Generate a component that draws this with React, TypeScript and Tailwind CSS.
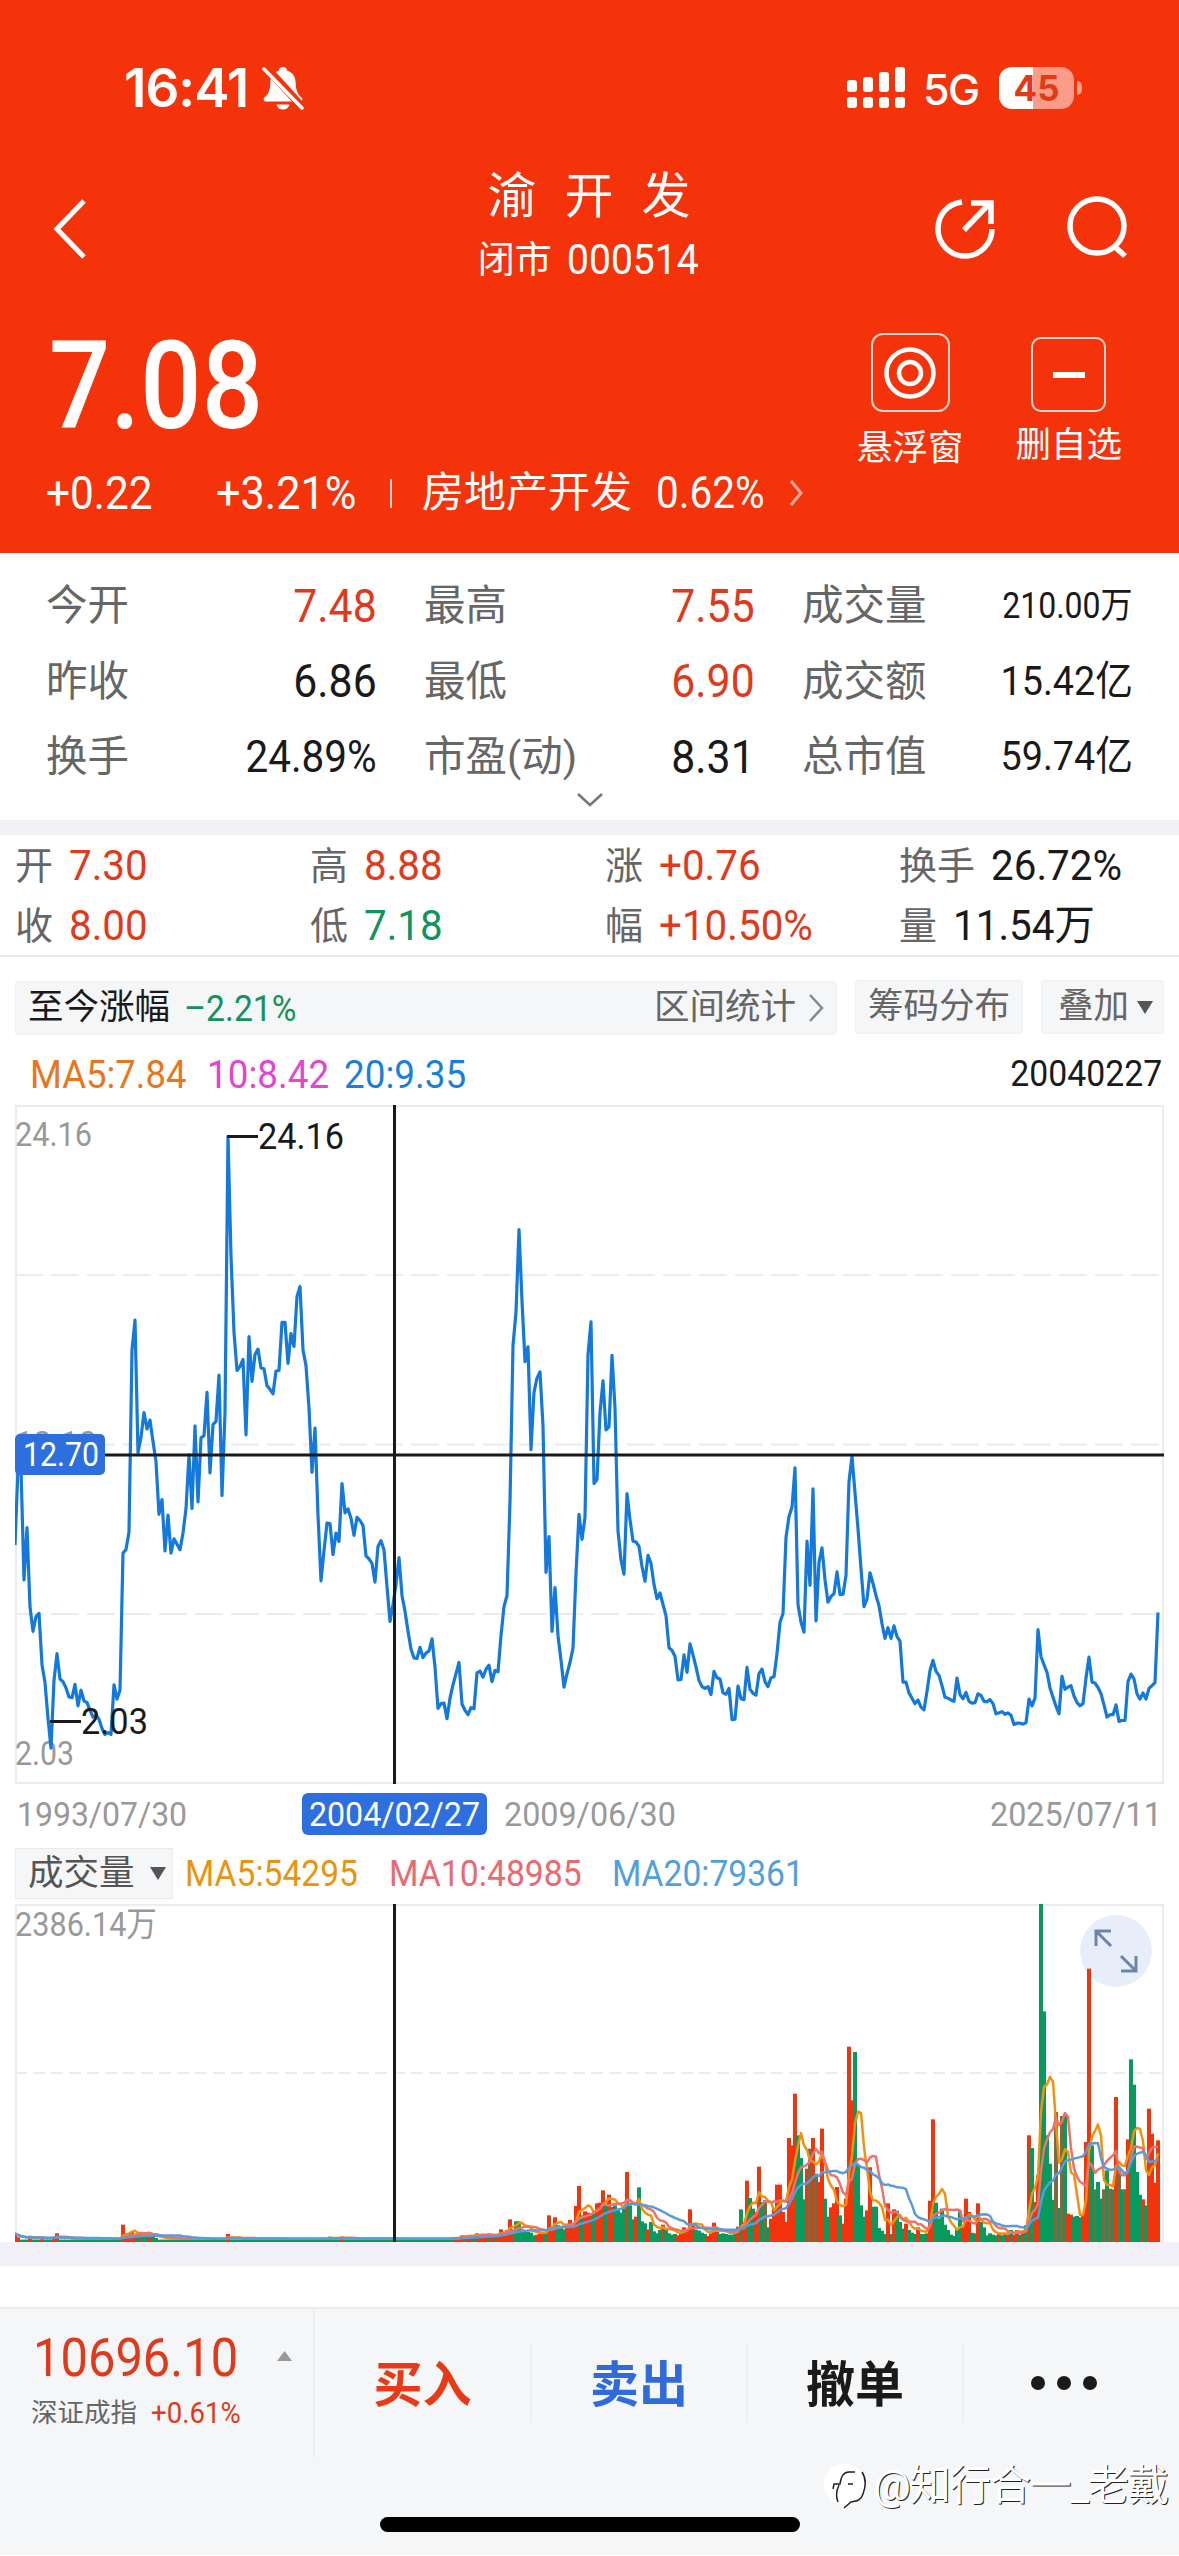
import type { ReactNode } from 'react';

// one value per month, measured down from the top of the price canvas
const PRICE = [
  997, 825, 825, 1075, 958, 1135, 1190, 1157, 1150, 1265, 1305, 1385, 1452, 1300, 1240, 1297, 1303, 1317, 1337, 1339,
  1309, 1357, 1322, 1346, 1350, 1367, 1382, 1378, 1387, 1408, 1421, 1417, 1421, 1310, 1342, 1322, 1015, 1007, 968, 560,
  493, 790, 755, 700, 737, 717, 765, 810, 928, 895, 1010, 930, 1015, 983, 995, 1007, 970, 915, 795, 915,
  730, 900, 757, 752, 655, 835, 727, 720, 616, 886, 700, 82, 350, 520, 606, 597, 581, 750, 530, 630,
  570, 558, 600, 602, 640, 648, 658, 607, 606, 498, 498, 590, 523, 552, 440, 418, 560, 595, 690, 834,
  735, 930, 1077, 1010, 948, 949, 1018, 970, 989, 859, 925, 916, 937, 975, 935, 942, 953, 1021, 1028, 1038,
  1080, 1000, 987, 1008, 1090, 1168, 1130, 1085, 1025, 1110, 1145, 1190, 1230, 1250, 1251, 1226, 1249, 1239, 1234, 1207,
  1270, 1363, 1352, 1351, 1386, 1340, 1310, 1285, 1260, 1353, 1367, 1377, 1361, 1364, 1283, 1279, 1293, 1275, 1266, 1303,
  1278, 1281, 1200, 1135, 1110, 900, 550, 475, 290, 450, 586, 553, 783, 655, 623, 609, 730, 1058, 978, 1190,
  1092, 1200, 1255, 1315, 1285, 1260, 1228, 1060, 928, 984, 935, 570, 497, 859, 850, 700, 629, 739, 732, 572,
  690, 965, 1030, 1062, 882, 940, 988, 990, 1000, 1045, 1078, 1020, 1038, 1085, 1117, 1104, 1130, 1155, 1227, 1233,
  1246, 1299, 1298, 1243, 1282, 1218, 1243, 1270, 1300, 1314, 1318, 1314, 1332, 1280, 1294, 1297, 1328, 1331, 1318, 1388,
  1387, 1313, 1341, 1343, 1271, 1320, 1329, 1333, 1285, 1275, 1303, 1314, 1294, 1292, 1240, 1170, 1150, 980, 933, 912,
  824, 1130, 1170, 1192, 988, 1087, 871, 1167, 1035, 1003, 1075, 1125, 1112, 1106, 1057, 1108, 1107, 1065, 855, 798,
  880, 960, 1050, 1135, 1118, 1059, 1083, 1110, 1133, 1173, 1206, 1182, 1206, 1178, 1202, 1212, 1304, 1304, 1328, 1340,
  1352, 1344, 1360, 1366, 1325, 1278, 1255, 1280, 1289, 1312, 1338, 1340, 1344, 1347, 1295, 1332, 1341, 1327, 1347, 1351,
  1350, 1330, 1334, 1347, 1348, 1343, 1352, 1375, 1373, 1370, 1376, 1373, 1378, 1399, 1396, 1396, 1398, 1395, 1342, 1357,
  1340, 1186, 1247, 1265, 1282, 1317, 1338, 1358, 1375, 1291, 1320, 1315, 1312, 1335, 1350, 1357, 1352, 1295, 1248, 1304,
  1306, 1316, 1330, 1355, 1382, 1377, 1377, 1355, 1392, 1390, 1390, 1303, 1286, 1297, 1330, 1342, 1328, 1342, 1318, 1312,
  1305, 1148,
];

// r = up month, g = down month, o = overlapped months; number is the bar height
const EARLY_PEAKS: Record<number, string> = {
  0: 'r22', 1: 'r14', 5: 'r14', 9: 'r12', 13: 'r16', 14: 'r26', 36: 'r52', 37: 'r26', 38: 'r24', 39: 'r30',
  40: 'r22', 41: 'g22', 42: 'r20', 43: 'g18', 44: 'g16', 45: 'r16', 46: 'g20', 47: 'g12', 71: 'r24', 105: 'g16', 109: 'r16',
};
const RECENT =
  'g10 r12 r14 r20 g14 r15 r17 g15 r26 r16 r22 r15 g22 r18 g15 r22 r38 r30 r36 r68 r38 g62 g62 g38 g34 g30 g28 g20 r22 r24 r28 g30 r80 r40 r74 g50 g42 g38 r42 r66 r46 r108 r168 g80 r92 r88 r80 g84 r116 r118 r155 g110 r142 r105 g110 g98 g88 g100 r210 g110 g68 r76 g164 g62 g56 r38 g60 g32 g26 g36 r52 g36 g26 g22 g24 r20 r30 r44 r34 r98 r50 g36 g34 g28 g24 r18 r26 r58 r32 g24 g26 g24 g22 g22 g28 r46 g98 r60 r184 g132 g100 r90 r226 g120 o125 g44 r70 r100 r172 r172 r90 r60 r312 r290 r445 g320 ' +
  'g252 g128 r220 o280 r312 o205 r180 r340 g130 g76 r104 r116 r165 g80 r55 r130 r586 r425 g570 g230 g110 g76 r95 r224 g106 g106 g42 g34 g24 r116 g24 r98 g94 g60 g40 r55 g36 g28 g24 r44 g24 g24 g26 r124 r368 g118 g70 g100 g52 g36 g22 g18 g40 g92 r44 r130 r90 g28 g26 r116 g60 g44 g20 g26 g22 g20 r24 g20 g26 r22 g36 r22 r36 g22 r30 g50 r320 g282 r120 r200 g1016 g692 g320 g235 g126 o390 g102 o378 g380 r85 r82 g76 g78 g74 r80 r300 r820 g290 o158 g180 g130 o158 g215 o160 g158 r435 o220 g158 o158 r308 g548 g472 g210 g142 r128 g110 r400 r325 r178 r305';

const VOLUME = [
  ...Array.from({ length: 146 }, (_, i) => EARLY_PEAKS[i] ?? 'g7'),
  ...RECENT.split(' '),
].map((token) => ({ kind: token[0], height: Number(token.slice(1)) / 3 }));

const BAR_COLOR: Record<string, string> = { r: '#f2330b', g: '#069a5c', o: '#7b6a3d' };

const RED = 'text-[#e0391b]';
const GREEN = 'text-[#14925c]';

const quotes: { label: string; value: string; className: string }[][] = [
  [
    { label: '今开', value: '7.48', className: `${RED} text-[46px] scale-x-[.93]` },
    { label: '最高', value: '7.55', className: `${RED} text-[46px] scale-x-[.93]` },
    { label: '成交量', value: '210.00万', className: 'text-[36px] scale-x-[.89]' },
  ],
  [
    { label: '昨收', value: '6.86', className: 'text-[46px] scale-x-[.93]' },
    { label: '最低', value: '6.90', className: `${RED} text-[46px] scale-x-[.93]` },
    { label: '成交额', value: '15.42亿', className: 'text-[41px] scale-x-[.92]' },
  ],
  [
    { label: '换手', value: '24.89%', className: 'text-[44px] scale-x-[.92]' },
    { label: '市盈(动)', value: '8.31', className: 'text-[46px] scale-x-[.93]' },
    { label: '总市值', value: '59.74亿', className: 'text-[41px] scale-x-[.92]' },
  ],
];

const monthStats = [
  { label: '开', value: '7.30', color: RED },
  { label: '高', value: '8.88', color: RED },
  { label: '涨', value: '+0.76', color: RED },
  { label: '换手', value: '26.72%', color: '' },
  { label: '收', value: '8.00', color: RED },
  { label: '低', value: '7.18', color: GREEN },
  { label: '幅', value: '+10.50%', color: RED },
  { label: '量', value: '11.54万', color: '' },
];

function movingAverage(size: number) {
  return VOLUME.map((_, i) => {
    const part = VOLUME.slice(Math.max(0, i - size + 1), i + 1);
    const avg = part.reduce((sum, bar) => sum + bar.height, 0) / part.length;
    return `${i * 3},${(337 - avg).toFixed(1)}`;
  }).join(' ');
}

// figures are set slightly narrower than the labels
function Num({ className = 'scale-x-[.93]', right, children }: { className?: string; right?: boolean; children: ReactNode }) {
  return (
    <span className={`inline-block whitespace-nowrap ${right ? 'origin-right' : 'origin-left'} ${className}`}>
      {children}
    </span>
  );
}

function StatusBar() {
  return (
    <div className="h-[176px] pt-[60px] pl-[124px] pr-[97px] flex items-start justify-between">
      <div className="flex items-center h-[56px]">
        <span className="font-['Inter'] font-semibold text-[53px] leading-none tracking-[-1px] w-[138px]">16:41</span>
        <svg width="42" height="44" viewBox="0 0 42 44">
          <path d="M21 1c-2.600 0-4 1.600-4.300 3.700C11 6.500 8.500 11 8.300 17c-.2 8-2 11-5.800 14.500C1 33 1.500 35.500 4 35.500h34c2.500 0 3-2.500 1.500-4C35.700 28 34 25 33.700 17c-.2-6-2.700-10.500-8.400-12.300C25 2.600 23.600 1 21 1zM14.500 38.500h13c-.7 3-3 5-6.500 5s-5.800-2-6.500-5z" fill="#fff" />
          <path d="M3 0l39 43" stroke="#f4330a" strokeWidth="8" />
          <path d="M2 3l38 39" stroke="#fff" strokeWidth="3.500" strokeLinecap="round" />
        </svg>
      </div>
      <div className="flex items-center h-[56px]">
        <svg width="60" height="42" viewBox="0 0 60 42" fill="#fff">
          <rect x="1" y="13" width="10" height="12" rx="3" />
          <rect x="17" y="10" width="10" height="15" rx="3" />
          <rect x="33" y="5" width="10" height="20" rx="3" />
          <rect x="49" y="0" width="10" height="25" rx="3" />
          {[1, 17, 33, 49].map((x) => (
            <rect key={x} x={x} y="30" width="10" height="11" rx="3" />
          ))}
        </svg>
        <span className="font-['Inter'] font-medium text-[43px] leading-none ml-[17px] w-[76px] tracking-[-1.5px] pt-[2px]">5G</span>
        <div className="w-[75px] h-[42px] rounded-[13px] flex items-center justify-center bg-linear-to-r from-white from-46% to-[#fa9d88] to-46%">
          <span className="font-['Inter'] font-bold text-[35px] leading-none text-[#e23a17]">45</span>
        </div>
        <div className="w-[5px] h-[14px] ml-[3px] rounded-r-full bg-[#fa9d88]"></div>
      </div>
    </div>
  );
}

function Header() {
  return (
    <header className="h-[553px] bg-[#f4330a] text-white">
      <StatusBar />
      <div className="h-[113px] flex items-start pl-[52px]">
        <svg className="mt-[21px]" width="64" height="64" viewBox="0 0 64 64" fill="none" stroke="#fff" strokeWidth="5">
          <path d="M32 4L5 32l27 28" />
        </svg>
        <div className="flex flex-col items-center w-[438px] ml-[254px]">
          <h1 className="text-[49px] leading-none tracking-[28px] -mr-[28px] mt-[-4px]">渝开发</h1>
          <div className="flex items-center mt-[18px] text-[37px] leading-none gap-[15px] translate-x-[4px]">
            <span>闭市</span>
            <Num className="text-[42px] scale-x-[.93]">000514</Num>
          </div>
        </div>
        <div className="flex gap-[68px] mt-[20px] ml-[125px]">
          <svg width="64" height="66" viewBox="0 0 64 66" fill="none" stroke="#fff" strokeWidth="5.500">
            <path d="M29 6C14 8 5 19 5 33c0 15 12 27 27 27s27-12 27-27" />
            <path d="M31 34L56 8M38 7h20v21" />
          </svg>
          <svg width="64" height="66" viewBox="0 0 64 66" fill="none" stroke="#fff" strokeWidth="5.500">
            <circle cx="32" cy="30" r="27" />
            <path d="M49 50l11 10" />
          </svg>
        </div>
      </div>

      <div className="flex justify-between pl-[46px] pr-[57px] pt-[44px] h-[264px]">
        <div className="w-[780px]">
          <div className="h-[108px] flex items-center">
            <Num className="text-[122px] ml-[3px] font-medium leading-none scale-x-[.885]">7.08</Num>
          </div>
          <div className="flex items-center h-[48px] mt-[28px] text-[46px] leading-none">
            <Num className="w-[170px] scale-x-[.92]">+0.22</Num>
            <Num className="w-[174px] scale-x-[.94]">+3.21%</Num>
            <div className="w-[2px] h-[29px] bg-white/80"></div>
            <span className="text-[42px] ml-[30px] w-[234px]">房地产开发</span>
            <Num className="text-[44px] w-[132px] scale-x-[.92]">0.62%</Num>
            <svg width="16" height="28" viewBox="0 0 16 28" fill="none" stroke="#fff" strokeOpacity="0.600" strokeWidth="3">
              <path d="M3 2l10 12L3 26" />
            </svg>
          </div>
        </div>
        <div className="flex gap-[52px]">
          <div className="flex flex-col items-center">
            <div className="w-[79px] h-[79px] rounded-[12px] border-2 border-white/80 flex items-center justify-center">
              <svg width="54" height="54" viewBox="0 0 54 54" fill="none" stroke="#fff" strokeWidth="4.500">
                <circle cx="27" cy="27" r="23.500" />
                <circle cx="27" cy="27" r="11" />
              </svg>
            </div>
            <span className="text-[35.5px] leading-none mt-[19px]">悬浮窗</span>
          </div>
          <div className="flex flex-col items-center pt-[4px]">
            <div className="w-[75px] h-[75px] rounded-[10px] border-2 border-white/80 flex items-center justify-center">
              <div className="w-[32px] h-[6px] bg-white"></div>
            </div>
            <span className="text-[35.5px] leading-none mt-[16px]">删自选</span>
          </div>
        </div>
      </div>
    </header>
  );
}

function Quotes() {
  return (
    <section className="h-[267px] pt-[15px] pl-[46px] pr-[46px]">
      {quotes.map((row, i) => (
        <div key={i} className="flex h-[75.5px] gap-[47px]">
          {row.map((cell) => (
            <div key={cell.label} className="w-[331px] flex items-center justify-between leading-none">
              <span className="text-[41.5px] text-[#666]">{cell.label}</span>
              <Num right className={cell.className}>{cell.value}</Num>
            </div>
          ))}
        </div>
      ))}
      <svg className="mx-auto -mt-[4px]" width="30" height="18" viewBox="0 0 30 18" fill="none" stroke="#777" strokeWidth="2.500">
        <path d="M3 3l12 11L27 3" />
      </svg>
    </section>
  );
}

function MonthStats() {
  return (
    <section className="h-[122px] pt-[1px] border-b-2 border-[#e8e8ea] pl-[15px] grid grid-cols-[295px_295px_294px_280px] auto-rows-[60px]">
      {monthStats.map((stat) => (
        <div key={stat.label} className="flex items-center gap-[16px] leading-none">
          <span className="text-[38px] text-[#666]">{stat.label}</span>
          <Num className={`text-[42.5px] scale-x-[.95] ${stat.color}`}>{stat.value}</Num>
        </div>
      ))}
    </section>
  );
}

function Toolbar() {
  const box = 'h-[54px] bg-[#f5f6f8] border border-[#eeeff1] rounded-[3px] flex items-center';
  return (
    <div className="flex gap-[18px] pl-[15px] pr-[15px] mt-[23px] text-[35.5px] leading-none">
      <div className={`${box} w-[822px] pl-[12px] pr-[11px] translate-y-[1px]`}>
        <span>至今涨幅</span>
        <Num className={`ml-[14px] text-[37px] scale-x-[.91] ${GREEN}`}>–2.21%</Num>
        <span className="ml-auto text-[#666]">区间统计</span>
        <svg className="ml-[11px]" width="18" height="30" viewBox="0 0 18 30" fill="none" stroke="#888" strokeWidth="2.500">
          <path d="M3 2l12 13L3 28" />
        </svg>
      </div>
      <div className={`${box} w-[168px] justify-center text-[#666]`}>筹码分布</div>
      <div className={`${box} w-[123px] pl-[16px] text-[#666]`}>
        <span>叠加</span>
        <Caret />
      </div>
    </div>
  );
}

function Caret() {
  return (
    <svg className="ml-[8px]" width="16" height="13" viewBox="0 0 16 13">
      <path d="M0 0h16L8 13z" fill="#555" />
    </svg>
  );
}

function PriceChart() {
  const points = PRICE.map((v, i) => `${i * 3},${(v / 2.24 - 5).toFixed(1)}`).join(' ');
  return (
    <div className="ml-[15px] mt-[6px]">
      <svg width="1149" height="679" viewBox="0 0 1149 679" className="block">
        <rect x="1" y="1" width="1147" height="677" fill="none" stroke="#ececec" strokeWidth="2" />
        {[170, 339.5, 509].map((y) => (
          <line key={y} x1="0" x2="1146" y1={y} y2={y} stroke="#ececec" strokeWidth="2" strokeDasharray="28 8" />
        ))}
        <g fill="#999" fontSize="33">
          <text x="0" y="41" textLength="77" lengthAdjust="spacingAndGlyphs">24.16</text>
          <text x="0" y="660" textLength="59" lengthAdjust="spacingAndGlyphs">2.03</text>
          <text x="0" y="350" textLength="82">13.10</text>
        </g>
        <polyline points={points} fill="none" stroke="#1479dc" strokeWidth="3.200" strokeLinejoin="round" />
        <g fill="#1a1a1a" fontSize="36">
          <text x="243" y="44" textLength="86" lengthAdjust="spacingAndGlyphs">24.16</text>
          <text x="66" y="629" textLength="67" lengthAdjust="spacingAndGlyphs">2.03</text>
        </g>
        <path d="M212 31.500h31M35 616.500h31" stroke="#1a1a1a" strokeWidth="3" />
        <path d="M0 350h1149M379.500 0v679" stroke="#1a1a1a" strokeWidth="3" />
        <rect x="0" y="329" width="90" height="41" rx="5" fill="#2e6fe0" />
        <text x="8" y="361" fill="#fff" fontSize="33" textLength="76" lengthAdjust="spacingAndGlyphs">12.70</text>
      </svg>
    </div>
  );
}

function VolumeChart() {
  return (
    <div className="ml-[15px]">
      <svg width="1149" height="338" viewBox="0 0 1149 338" className="block">
        <path d="M1 338V1h1147v337" fill="none" stroke="#ececec" strokeWidth="2" />
        <line x1="0" x2="1146" y1="169" y2="169" stroke="#ececec" strokeWidth="2" strokeDasharray="12 6" />
        <text x="0" y="32" fill="#999" fontSize="34" textLength="142" lengthAdjust="spacingAndGlyphs">2386.14万</text>
        <circle cx="1101" cy="47" r="36" fill="#e7eefa" />
        <g fill="none" stroke="#6d86a8" strokeWidth="3">
          <path d="M1096 42l-15-15M1096 27h-15v15M1106 52l15 15M1121 52v15h-15" />
        </g>
        {VOLUME.map((bar, i) => (
          <rect key={i} x={i * 3 - 2} y={338 - bar.height} width="4" height={bar.height} fill={BAR_COLOR[bar.kind]} />
        ))}
        <g fill="none" strokeWidth="2.500" strokeLinejoin="round">
          <polyline points={movingAverage(5)} stroke="#f0920e" />
          <polyline points={movingAverage(10)} stroke="#f0706c" />
          <polyline points={movingAverage(20)} stroke="#5a9bdc" />
        </g>
        <path d="M379.500 0v338" stroke="#1a1a1a" strokeWidth="3" />
      </svg>
    </div>
  );
}

function BottomBar() {
  return (
    <footer className="h-[248px] bg-[#f5f6f7] border-t-2 border-[#ebecee] relative">
      <div className="flex items-start">
        <div className="w-[315px] h-[148px] border-r-2 border-[#efeff2] flex pl-[31px] pt-[20px]">
          <div className="w-[246px]">
            <Num className={`text-[54px] leading-[58px] ml-[2px] scale-x-[.905] ${RED}`}>10696.10</Num>
            <div className="flex items-center gap-[14px] leading-none mt-[11px]">
              <span className="text-[26.5px] text-[#666]">深证成指</span>
              <Num className={`text-[30px] scale-x-[.92] ${RED}`}>+0.61%</Num>
            </div>
          </div>
          <svg className="mt-[22px]" width="15" height="10" viewBox="0 0 15 10">
            <path d="M0 10h15L7.500 0z" fill="#999" />
          </svg>
        </div>
        <div className="flex mt-[35px] text-[49px] font-bold leading-none">
          <div className="w-[217px] h-[78px] border-r-2 border-[#efeff2] flex items-center justify-center pt-[4px] text-[#e83a17]">买入</div>
          <div className="w-[216px] h-[78px] border-r-2 border-[#efeff2] flex items-center justify-center pt-[4px] text-[#2f6cd9]">卖出</div>
          <div className="w-[216px] h-[78px] border-r-2 border-[#efeff2] flex items-center justify-center pt-[4px]">撤单</div>
          <div className="w-[215px] h-[78px] flex items-center justify-center gap-[12px] pr-[16px]">
            {[0, 1, 2].map((i) => (
              <div key={i} className="size-[14px] rounded-full bg-[#1a1a1a]"></div>
            ))}
          </div>
        </div>
      </div>
      <div className="absolute right-[11px] top-[152px] flex items-center gap-[6px] text-white text-[41.5px] leading-[50px] [text-shadow:1px_1px_0_#222]">
        <svg width="44" height="50" viewBox="0 0 44 50">
          <path d="M21 3c13 0 21 8 21 20 0 10-6 17-14 20l-7 5v-4C9 43 1 35 1 23 1 11 8 3 21 3z" fill="#fff" />
          <path d="M39 11c4 6 4 14 1 22-2 6-5 7-12 8l-7 6M10 28l1-5h6c1-8 4-12 9-12h6M16 24c-3 6-3 12-1 17M25 23h5" fill="none" stroke="#222" strokeWidth="1.500" />
        </svg>
        <span className="tracking-[-1.300px]">@知行合一_老戴</span>
      </div>
      <div className="absolute left-[380px] top-[208px] w-[420px] h-[15px] rounded-full bg-black"></div>
    </footer>
  );
}

export default function App() {
  return (
    <div className="w-[1179px] h-[2556px] overflow-hidden bg-white text-[#1a1a1a] font-['Roboto','Noto_Sans_CJK_SC',sans-serif]">
      <Header />
      <Quotes />
      <div className="h-[15px] bg-[#f2f1f5]"></div>
      <MonthStats />
      <Toolbar />
      <div className="flex items-center h-[65px] pt-[16px] pl-[30px] pr-[17px] text-[38px] leading-none">
        <Num className="w-[177px] scale-x-[.96] text-[#e8761e]">MA5:7.84</Num>
        <Num className="w-[137px] scale-x-[.97] text-[#e444cf]">10:8.42</Num>
        <Num className="scale-x-[.97] text-[#1a7fdb]">20:9.35</Num>
        <Num right className="ml-auto text-[36.5px] scale-x-[.925]">20040227</Num>
      </div>
      <PriceChart />
      <div className="flex items-center h-[59px] pl-[17px] pr-[17px] text-[34px] leading-none text-[#999]">
        <Num className="w-[285px] scale-x-[.94]">1993/07/30</Num>
        <div className="w-[185px] h-[42px] rounded-[6px] bg-[#2e6fe0] text-white flex items-center pl-[7px]">
          <Num className="scale-x-[.945]">2004/02/27</Num>
        </div>
        <Num className="ml-[17px] scale-x-[.95]">2009/06/30</Num>
        <Num right className="ml-auto scale-x-[.95]">2025/07/11</Num>
      </div>
      <div className="flex items-start h-[61px] pt-[5px] pl-[15px]">
        <div className="w-[158px] h-[51px] bg-[#f5f6f8] border border-[#e9eaec] flex items-center pl-[12px] text-[35.5px] leading-none text-[#555]">
          <span>成交量</span>
          <span className="ml-[7px]">
            <Caret />
          </span>
        </div>
        <div className="flex items-center h-[51px] pt-[2px] ml-[12px] text-[36.5px] leading-none">
          <Num className="w-[204px] scale-x-[.92] text-[#e8940f]">MA5:54295</Num>
          <Num className="w-[223px] scale-x-[.925] text-[#e96a70]">MA10:48985</Num>
          <Num className="scale-x-[.92] text-[#529fdc]">MA20:79361</Num>
        </div>
      </div>
      <VolumeChart />
      <div className="h-[24px] bg-[#f1f0f6]"></div>
      <div className="h-[41px]"></div>
      <BottomBar />
    </div>
  );
}
